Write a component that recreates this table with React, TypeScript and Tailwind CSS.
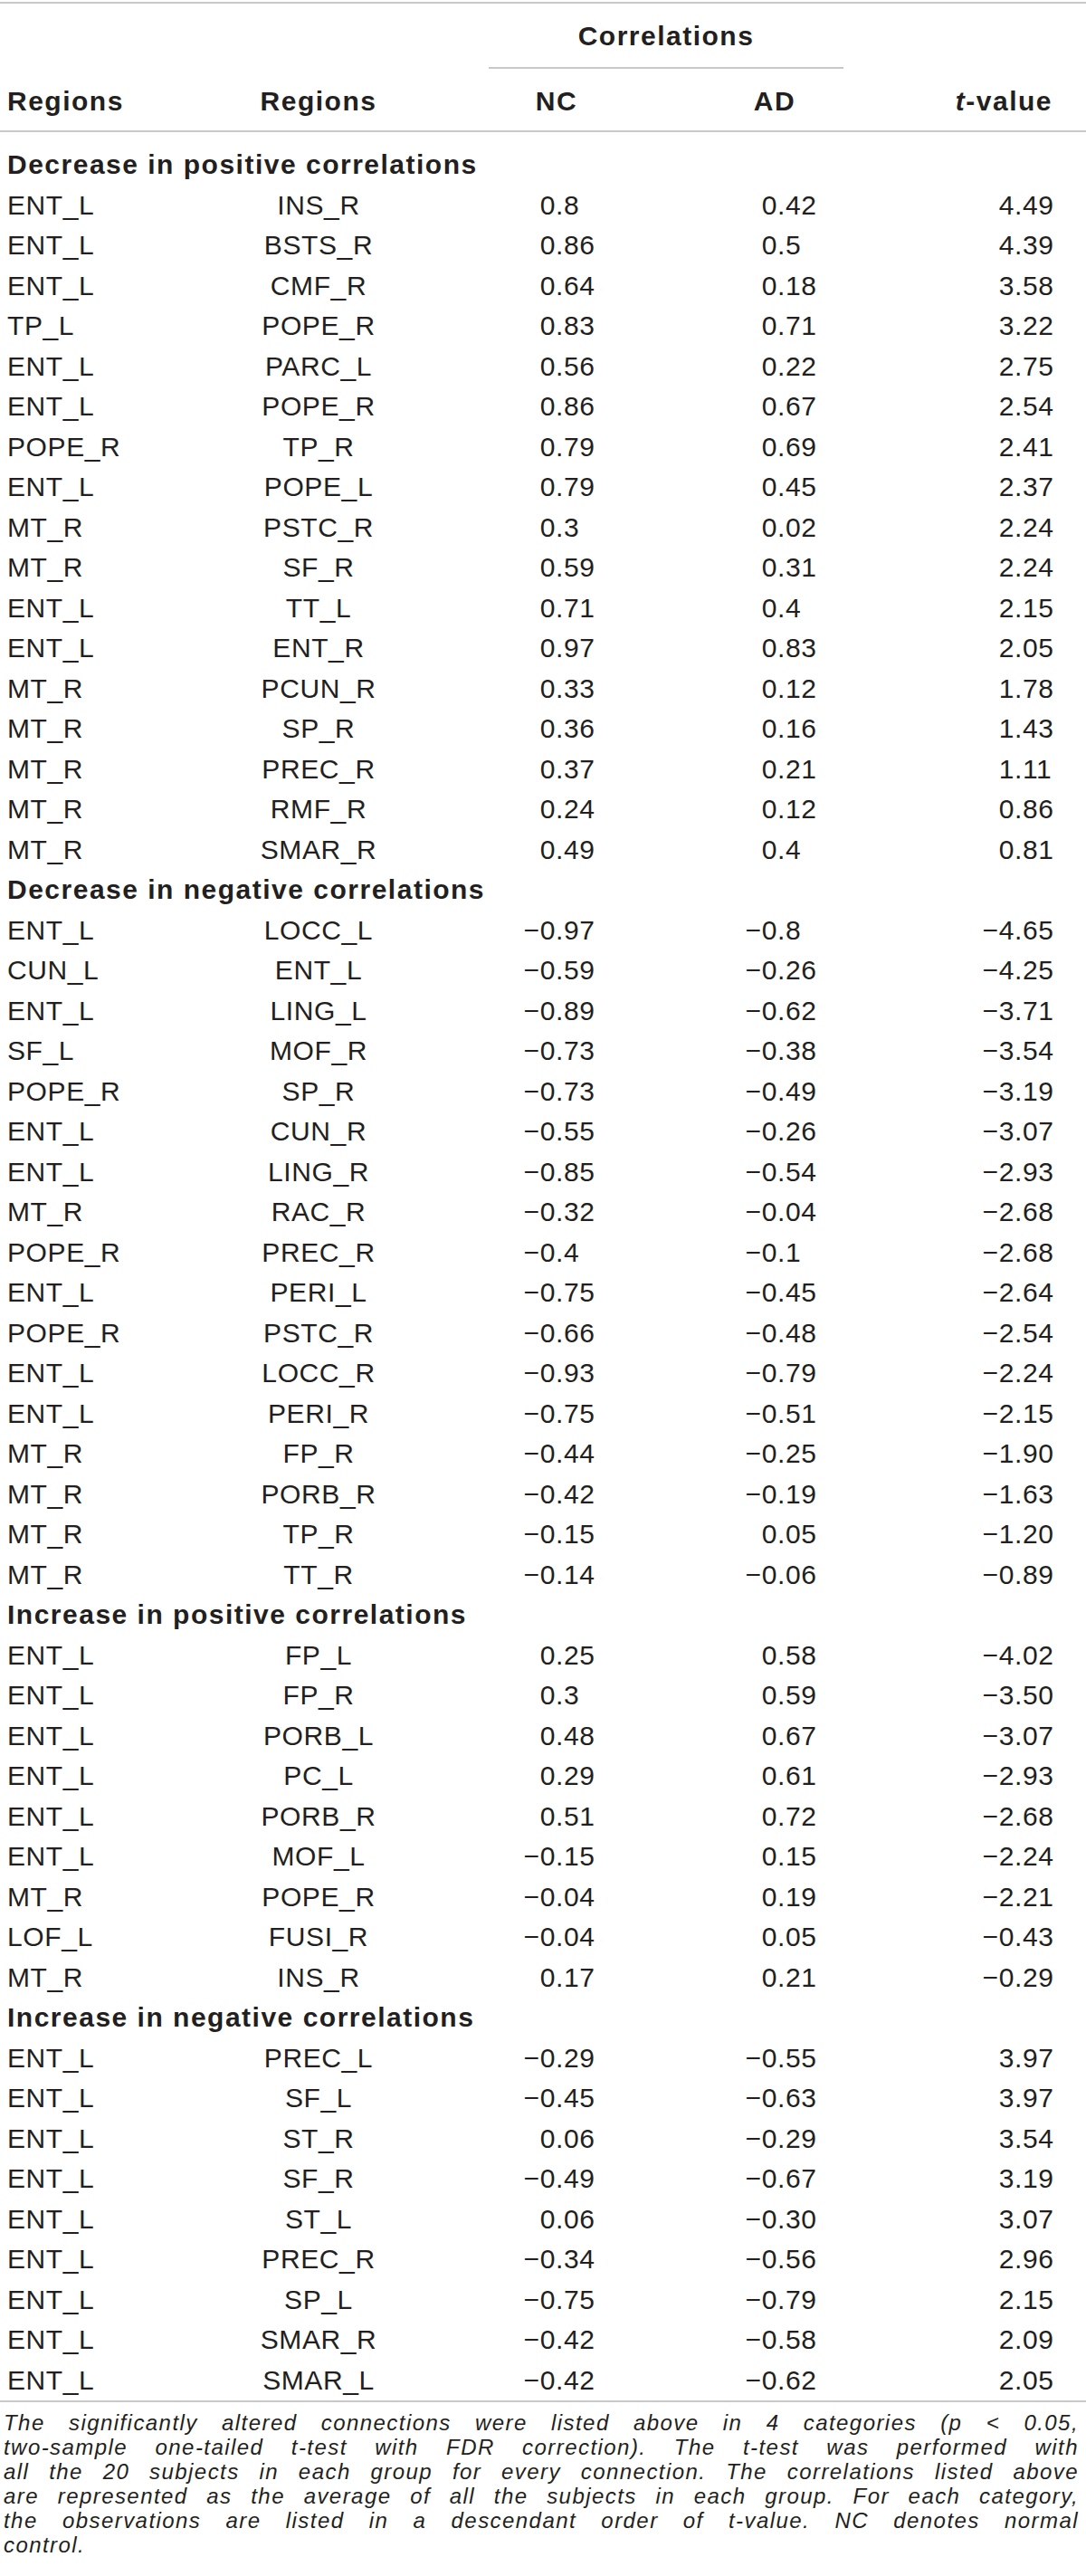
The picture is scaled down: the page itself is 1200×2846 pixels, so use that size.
import React from 'react';

type Row = [string, string, string, string, string];

const sections: { title: string; rows: Row[] }[] = [
  {
    title: 'Decrease in positive correlations',
    rows: [
      ['ENT_L', 'INS_R', '0.8', '0.42', '4.49'],
      ['ENT_L', 'BSTS_R', '0.86', '0.5', '4.39'],
      ['ENT_L', 'CMF_R', '0.64', '0.18', '3.58'],
      ['TP_L', 'POPE_R', '0.83', '0.71', '3.22'],
      ['ENT_L', 'PARC_L', '0.56', '0.22', '2.75'],
      ['ENT_L', 'POPE_R', '0.86', '0.67', '2.54'],
      ['POPE_R', 'TP_R', '0.79', '0.69', '2.41'],
      ['ENT_L', 'POPE_L', '0.79', '0.45', '2.37'],
      ['MT_R', 'PSTC_R', '0.3', '0.02', '2.24'],
      ['MT_R', 'SF_R', '0.59', '0.31', '2.24'],
      ['ENT_L', 'TT_L', '0.71', '0.4', '2.15'],
      ['ENT_L', 'ENT_R', '0.97', '0.83', '2.05'],
      ['MT_R', 'PCUN_R', '0.33', '0.12', '1.78'],
      ['MT_R', 'SP_R', '0.36', '0.16', '1.43'],
      ['MT_R', 'PREC_R', '0.37', '0.21', '1.11'],
      ['MT_R', 'RMF_R', '0.24', '0.12', '0.86'],
      ['MT_R', 'SMAR_R', '0.49', '0.4', '0.81'],
    ],
  },
  {
    title: 'Decrease in negative correlations',
    rows: [
      ['ENT_L', 'LOCC_L', '−0.97', '−0.8', '−4.65'],
      ['CUN_L', 'ENT_L', '−0.59', '−0.26', '−4.25'],
      ['ENT_L', 'LING_L', '−0.89', '−0.62', '−3.71'],
      ['SF_L', 'MOF_R', '−0.73', '−0.38', '−3.54'],
      ['POPE_R', 'SP_R', '−0.73', '−0.49', '−3.19'],
      ['ENT_L', 'CUN_R', '−0.55', '−0.26', '−3.07'],
      ['ENT_L', 'LING_R', '−0.85', '−0.54', '−2.93'],
      ['MT_R', 'RAC_R', '−0.32', '−0.04', '−2.68'],
      ['POPE_R', 'PREC_R', '−0.4', '−0.1', '−2.68'],
      ['ENT_L', 'PERI_L', '−0.75', '−0.45', '−2.64'],
      ['POPE_R', 'PSTC_R', '−0.66', '−0.48', '−2.54'],
      ['ENT_L', 'LOCC_R', '−0.93', '−0.79', '−2.24'],
      ['ENT_L', 'PERI_R', '−0.75', '−0.51', '−2.15'],
      ['MT_R', 'FP_R', '−0.44', '−0.25', '−1.90'],
      ['MT_R', 'PORB_R', '−0.42', '−0.19', '−1.63'],
      ['MT_R', 'TP_R', '−0.15', '0.05', '−1.20'],
      ['MT_R', 'TT_R', '−0.14', '−0.06', '−0.89'],
    ],
  },
  {
    title: 'Increase in positive correlations',
    rows: [
      ['ENT_L', 'FP_L', '0.25', '0.58', '−4.02'],
      ['ENT_L', 'FP_R', '0.3', '0.59', '−3.50'],
      ['ENT_L', 'PORB_L', '0.48', '0.67', '−3.07'],
      ['ENT_L', 'PC_L', '0.29', '0.61', '−2.93'],
      ['ENT_L', 'PORB_R', '0.51', '0.72', '−2.68'],
      ['ENT_L', 'MOF_L', '−0.15', '0.15', '−2.24'],
      ['MT_R', 'POPE_R', '−0.04', '0.19', '−2.21'],
      ['LOF_L', 'FUSI_R', '−0.04', '0.05', '−0.43'],
      ['MT_R', 'INS_R', '0.17', '0.21', '−0.29'],
    ],
  },
  {
    title: 'Increase in negative correlations',
    rows: [
      ['ENT_L', 'PREC_L', '−0.29', '−0.55', '3.97'],
      ['ENT_L', 'SF_L', '−0.45', '−0.63', '3.97'],
      ['ENT_L', 'ST_R', '0.06', '−0.29', '3.54'],
      ['ENT_L', 'SF_R', '−0.49', '−0.67', '3.19'],
      ['ENT_L', 'ST_L', '0.06', '−0.30', '3.07'],
      ['ENT_L', 'PREC_R', '−0.34', '−0.56', '2.96'],
      ['ENT_L', 'SP_L', '−0.75', '−0.79', '2.15'],
      ['ENT_L', 'SMAR_R', '−0.42', '−0.58', '2.09'],
      ['ENT_L', 'SMAR_L', '−0.42', '−0.62', '2.05'],
    ],
  },
];

const footnote = [
  'The significantly altered connections were listed above in 4 categories (',
  'two-sample one-tailed t-test with FDR correction). The t-test was performed with',
  'all the 20 subjects in each group for every connection. The correlations listed above',
  'are represented as the average of all the subjects in each group. For each category,',
  'the observations are listed in a descendant order of t-value. NC denotes normal',
];

// splits a number at the decimal point so columns line up on it
const split = (v: string) => {
  const i = v.indexOf('.');
  return [v.slice(0, i), v.slice(i)];
};

const DataRow: React.FC<{ row: Row }> = ({ row }) => {
  const [a, b, nc, ad, t] = row;
  const [ncInt, ncFrac] = split(nc);
  const [adInt, adFrac] = split(ad);
  const [tInt, tFrac] = split(t);
  return (
    <div className="grid grid-cols-[250px_204px_160px_110px_135px_127px_135px_1fr] h-[44.5px] items-center leading-none tracking-[0.02em]">
      <div className="pl-[8px]">{a}</div>
      <div className="text-center">{b}</div>
      <div className="text-right">{ncInt}</div>
      <div>{ncFrac}</div>
      <div className="text-right">{adInt}</div>
      <div>{adFrac}</div>
      <div className="text-right">{tInt}</div>
      <div>{tFrac}</div>
    </div>
  );
};

const App: React.FC = () => {
  return (
    <div className="w-[1200px] bg-white text-[#231f20] font-['Liberation_Sans',Arial,sans-serif] text-[30px]">
      <div className="pt-[2px]">
        <div className="h-[2px] bg-[#c8c8c8]" />
      </div>

      {/* Column group header */}
      <div className="flex">
        <div className="w-[540px]" />
        <div className="w-[392px] h-[72px] pt-[2px] flex items-center justify-center border-b-2 border-[#c8c8c8] font-bold tracking-[0.05em] leading-none">
          Correlations
        </div>
      </div>

      <div className="flex h-[70px] pt-[4px] items-center font-bold tracking-[0.05em] leading-none border-b-2 border-[#c8c8c8]">
        <div className="w-[250px] pl-[8px]">Regions</div>
        <div className="w-[204px] text-center">Regions</div>
        <div className="w-[322px] text-center">NC</div>
        <div className="w-[160px] text-center">AD</div>
        <div className="w-[227px] text-right">
          <span className="italic">t</span>-value
        </div>
      </div>

      <div className="pt-[14px] border-b-2 border-[#c8c8c8]">
        {sections.map(s => (
          <div key={s.title}>
            <div className="h-[44.5px] flex items-center pl-[8px] font-bold tracking-[0.05em] leading-none">
              {s.title}
            </div>
            {s.rows.map((r, i) => (
              <DataRow key={i} row={r} />
            ))}
          </div>
        ))}
      </div>

      {/* Footnote */}
      <div className="pt-[9px] pb-[16px] italic text-[24px] leading-[27px] tracking-[0.06em] pr-[8px] pl-[4px]">
        {footnote.map((line, i) => (
          <div key={i} className="text-justify [text-align-last:justify]">
            {i === 0 ? (
              <>
                {line}p {'<'} 0.05,
              </>
            ) : (
              line
            )}
          </div>
        ))}
        <div>control.</div>
      </div>
    </div>
  );
};

export default App;
